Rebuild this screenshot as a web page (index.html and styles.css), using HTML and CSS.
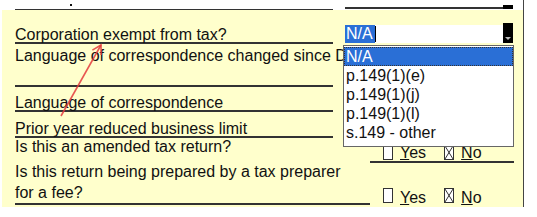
FILE: index.html
```html
<!DOCTYPE html>
<html>
<head>
<meta charset="utf-8">
<link rel="stylesheet" href="styles.css">
</head>
<body>
<div class="page">
  <div class="top">
    <div class="tl tl-left"><span class="tick"></span></div>
    <div class="tl-right"><div class="tl-line"></div><span class="tl-btn"></span></div>
  </div>
  <div class="panel">
    <div class="row r1">
      <div class="label ul">Corporation exempt from tax?</div>
      <div class="field">
        <div class="combo">
          <span class="sel">N/A</span><span class="caret"></span>
          <span class="btn"><svg width="6" height="3" viewBox="0 0 6 3"><polygon points="0,0 6,0 3,3" fill="#bbb"/></svg></span>
        </div>
      </div>
    </div>
    <div class="row r2"><div class="label ul">Language of correspondence changed since D</div></div>
    <div class="row r3"><div class="label ul">Language of correspondence</div></div>
    <div class="row r4"><div class="label ul">Prior year reduced business limit</div></div>
    <div class="row r5">
      <div class="label l5">Is this an amended tax return?</div>
      <div class="yn yn-ul">
        <span class="box"></span><span class="yn-t"><u>Y</u>es</span>
        <span class="box box2"><svg width="10" height="15" viewBox="0 0 10 15"><path d="M1 1 L9 14 M9 1 L1 14" stroke="#333" stroke-width="1" fill="none"/></svg></span><span class="yn-t"><u>N</u>o</span>
      </div>
    </div>
    <div class="row r6">
      <div class="label ul l6"><div>Is this return being prepared by a tax preparer</div><div class="l6b">for a fee?</div></div>
      <div class="yn yn6">
        <span class="box"></span><span class="yn-t"><u>Y</u>es</span>
        <span class="box box2"><svg width="10" height="15" viewBox="0 0 10 15"><path d="M1 1 L9 14 M9 1 L1 14" stroke="#333" stroke-width="1" fill="none"/></svg></span><span class="yn-t"><u>N</u>o</span>
      </div>
    </div>
    <ul class="list">
      <li class="hl">N/A</li>
      <li>p.149(1)(e)</li>
      <li>p.149(1)(j)</li>
      <li>p.149(1)(l)</li>
      <li>s.149 - other</li>
    </ul>
  </div>
  <svg class="arrow" width="537" height="217" viewBox="0 0 537 217">
    <path d="M61 116 L101 45" stroke="#e4393c" stroke-width="1.6" fill="none" stroke-opacity="0.85"/>
    <path d="M92.4 50.1 L101 45 L101.1 55" stroke="#e4393c" stroke-width="1.6" fill="none" stroke-opacity="0.85"/>
  </svg>
</div>
</body>
</html>
```

FILE: styles.css
```css
html, body {
  margin: 0;
  padding: 0;
  background: #fff;
}
body {
  font-family: "Liberation Sans", Arial, sans-serif;
  font-size: 16px;
  color: #111;
}
.page {
  position: relative;
  width: 523px;
  height: 207px;
  border-right: 1px solid #444;
  box-sizing: content-box;
}
.top {
  height: 10px;
  padding-left: 15px;
  display: flex;
  align-items: flex-start;
  box-sizing: border-box;
}
.tl-left {
  width: 318px;
  height: 4px;
  margin-top: 5px;
  border-bottom: 2px solid #333;
  display: flex;
  align-items: flex-start;
}
.tick {
  width: 2px;
  height: 2px;
  margin-left: 55px;
  margin-top: -1px;
  background: #111;
}
.tl-right {
  width: 168px;
  margin-left: 12px;
  margin-top: 5px;
  height: 4px;
  display: flex;
  align-items: flex-end;
}
.tl-line {
  flex: 1;
  border-bottom: 2px solid #333;
}
.tl-btn {
  width: 10px;
  height: 4px;
  background: #000;
}
.panel {
  position: relative;
  margin-left: 2px;
  padding-left: 13px;
  height: 197px;
  background: #ffffcc;
}
.row {
  display: flex;
  align-items: flex-end;
}
.label {
  width: 318px;
  line-height: 15px;
  white-space: nowrap;
}
.ul {
  border-bottom: 2px solid #333;
}
.field {
  margin-left: 12px;
  width: 168px;
}
.r1 { height: 34px; }
.r2 { height: 43px; align-items: stretch; }
.r2 .label { padding-top: 4px; box-sizing: border-box; }
.r3 { height: 25px; }
.r4 { height: 26px; }
.r5 { height: 25px; }
.r5 .l5 { align-self: flex-start; padding-top: 1px; }
.r6 { height: 42px; }
.l6 { width: 355px; padding-bottom: 3px; }
.l6b { margin-top: 6px; }

.combo {
  height: 18px;
  margin-bottom: 1px;
  background: #fff;
  display: flex;
  align-items: stretch;
}
.sel {
  background: #2a6fd6;
  color: #fff;
  line-height: 18px;
  padding: 0 2px 0 1px;
}
.caret {
  width: 1px;
  background: #000;
  margin: 1px 0;
}
.btn {
  margin-left: auto;
  width: 10px;
  height: 20px;
  margin-top: -2px;
  background: #000;
  display: flex;
  justify-content: center;
  align-items: flex-end;
  padding-bottom: 3px;
  box-sizing: border-box;
}
.btn svg { display: block; }

.yn {
  width: 144px;
  box-sizing: border-box;
  padding-left: 13px;
  display: flex;
  align-items: flex-end;
}
.yn-ul {
  margin-left: 37px;
  border-bottom: 2px solid #333;
  padding-bottom: 1px;
}
.yn6 .box { margin-bottom: 2px; }
.box {
  width: 10px;
  height: 15px;
  box-sizing: border-box;
  border: 1px solid #333;
  background: #fff;
  position: relative;
}
.box svg {
  position: absolute;
  left: -1px;
  top: -1px;
}
.box2 { margin-left: 18px; }
.yn-t {
  line-height: 15px;
  margin-left: 7px;
}
.yn-t u { text-decoration-thickness: 1px; }

.list {
  position: absolute;
  left: 341px;
  top: 35px;
  width: 171px;
  box-sizing: border-box;
  margin: 0;
  padding: 1px 0 4px 0;
  list-style: none;
  background: #fff;
  border: 1px solid #666;
}
.list li {
  height: 19px;
  line-height: 20px;
  padding-left: 2px;
  white-space: nowrap;
}
.list li.hl {
  background: #2a6fd6;
  color: #fff;
  outline: 1px dotted #333;
  outline-offset: -1px;
}
.arrow {
  position: absolute;
  left: 0;
  top: 0;
  pointer-events: none;
}
```
